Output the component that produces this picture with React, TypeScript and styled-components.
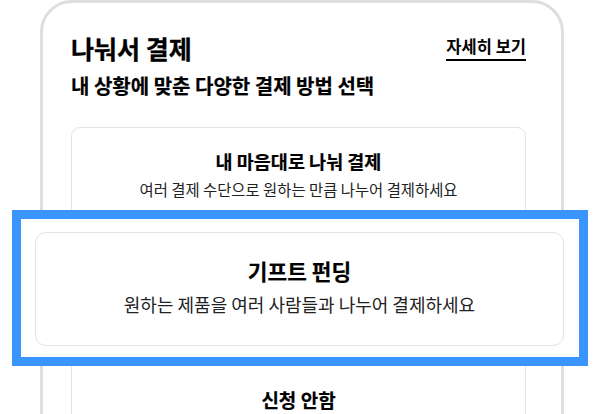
import React from 'react'
import styled, { createGlobalStyle } from 'styled-components'

const GlobalStyle = createGlobalStyle`
  html, body {
    margin: 0;
    padding: 0;
    background: #fff;
    overflow: hidden;
  }
  body {
    font-family: 'Noto Sans CJK KR', 'Noto Sans', sans-serif;
    color: #000;
  }
`

const Stage = styled.div`
  position: relative;
  width: 600px;
  height: 414px;
  overflow: hidden;
`

const Sheet = styled.section`
  margin-left: 40px;
  width: 524px;
  min-height: 480px;
  box-sizing: border-box;
  border: 3px solid #dedede;
  border-radius: 32px;
  padding: 28px 35px 0 28px;
  background: #fff;
`

const HeaderRow = styled.div`
  display: flex;
  justify-content: space-between;
  align-items: flex-start;
`

const Title = styled.h2`
  margin: 0;
  font-size: 25px;
  line-height: 34px;
  font-weight: 700;
  -webkit-text-stroke: 0.3px #000;
`

const MoreLink = styled.a`
  margin-top: 4px;
  font-size: 16.5px;
  line-height: 22px;
  font-weight: 700;
  color: #000;
  text-decoration: none;
  border-bottom: 2px solid #000;
  padding-bottom: 2px;
`

const Lead = styled.p`
  margin: 7px 0 0;
  font-size: 20px;
  line-height: 28px;
  font-weight: 700;
  -webkit-text-stroke: 0.2px #000;
`

const OptionList = styled.div`
  display: flex;
  flex-direction: column;
  gap: 12px;
  margin-top: 27px;
`

const Option = styled.div<{ $covered?: boolean; $single?: boolean }>`
  height: 98px;
  box-sizing: border-box;
  border: 1.5px solid #e3e3e3;
  border-radius: 9px;
  padding: ${(p) => (p.$single ? '8px 0 0' : '0 0 4px')};
  display: flex;
  flex-direction: column;
  align-items: center;
  justify-content: center;
  gap: 6px;
  & > * {
    visibility: ${(p) => (p.$covered ? 'hidden' : 'visible')};
  }
`

const OptionTitle = styled.div<{ $size?: number }>`
  font-size: ${(p) => p.$size ?? 18.5}px;
  line-height: 1.3;
  font-weight: 700;
  color: #000;
  -webkit-text-stroke: 0.2px #000;
`

const OptionDesc = styled.div<{ $size?: number }>`
  font-size: ${(p) => p.$size ?? 15.4}px;
  line-height: 1.3;
  font-weight: 400;
  color: #222;
`

/* callout that zooms in on the selected option */
const Highlight = styled.div`
  position: absolute;
  left: 12px;
  top: 210px;
  width: 576px;
  height: 156px;
  box-sizing: border-box;
  border: 9px solid #3b95ff;
  background: #fff;
  padding: 13px 15px 11px 14px;
  display: flex;
`

const BigOption = styled(Option)`
  flex: 1;
  height: auto;
  border-radius: 11px;
  padding: 0 0 4px;
  gap: 8px;
`

const App = () => {
  return (
    <Stage>
      <GlobalStyle />
      <Sheet>
        <HeaderRow>
          <Title>나눠서 결제</Title>
          <MoreLink href="#">자세히 보기</MoreLink>
        </HeaderRow>
        <Lead>내 상황에 맞춘 다양한 결제 방법 선택</Lead>
        <OptionList>
          <Option>
            <OptionTitle>내 마음대로 나눠 결제</OptionTitle>
            <OptionDesc>여러 결제 수단으로 원하는 만큼 나누어 결제하세요</OptionDesc>
          </Option>
          <Option $covered>
            <OptionTitle>기프트 펀딩</OptionTitle>
            <OptionDesc>원하는 제품을 여러 사람들과 나누어 결제하세요</OptionDesc>
          </Option>
          <Option $single>
            <OptionTitle $size={19}>신청 안함</OptionTitle>
          </Option>
        </OptionList>
      </Sheet>
      <Highlight>
        <BigOption>
          <OptionTitle $size={21.4}>기프트 펀딩</OptionTitle>
          <OptionDesc $size={18}>원하는 제품을 여러 사람들과 나누어 결제하세요</OptionDesc>
        </BigOption>
      </Highlight>
    </Stage>
  )
}

export default App
